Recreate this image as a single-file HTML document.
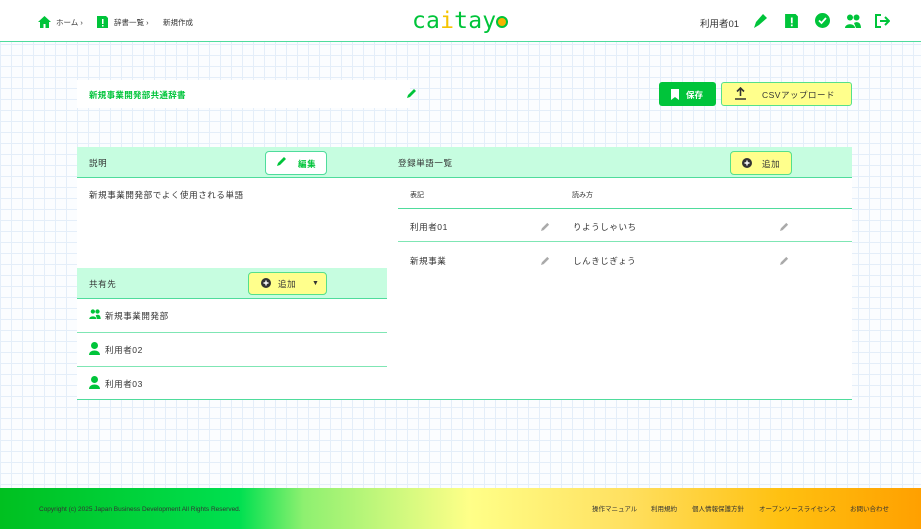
<!DOCTYPE html>
<html><head><meta charset="utf-8"><style>
*{margin:0;padding:0;box-sizing:border-box}
body{width:921px;height:529px;overflow:hidden;font-family:"Liberation Sans","Noto Sans CJK JP",sans-serif;color:#333;position:relative;
background-color:#fbfdff;background-image:linear-gradient(#e4eef9 1px,transparent 1px),linear-gradient(90deg,#e4eef9 1px,transparent 1px);background-size:11px 11px}
.a{position:absolute}
header{position:absolute;left:0;top:0;width:921px;height:42px;background:#fff;border-bottom:1.5px solid #4fdc9c}
.bc{font-size:7.5px;color:#333;top:17px}
.g{fill:#00c43a}
.panel{left:77px;top:147px;width:775px;height:253px;background:#fff;border-bottom:1px solid #4fdc9c}
.band{background:#c6fde0;border-bottom:1.5px solid #4fdc9c;height:31px}
.t9{font-size:8.5px;letter-spacing:0.6px}
.row{border-bottom:1.5px solid #7fe6b4}
footer{position:absolute;left:0;top:488px;width:921px;height:41px;background:linear-gradient(90deg,#00c020 0%,#00e050 26%,#8ef070 33%,#ffff88 51%,#ffe060 68%,#ffc010 85%,#ffa000 100%)}
footer span{position:absolute;top:18px;font-size:6.5px;color:#333;line-height:8px}
</style></head><body>
<header>
<svg class="a" style="left:38px;top:16px" width="13" height="12" viewBox="0 0 13 12"><path class="g" d="M6.5 0L0 6h2v6h3.5V8h2v4H11V6h2z"/></svg>
<span class="a bc" style="left:56px">ホーム ›</span>
<svg class="a" style="left:97px;top:16px" width="11" height="12" viewBox="0 0 11 12"><path class="g" d="M0 0h9l2 2v10H0z"/><rect x="5" y="3" width="1.5" height="5" fill="#fff"/><rect x="5" y="9" width="1.5" height="1.5" fill="#fff"/></svg>
<span class="a bc" style="left:114px">辞書一覧 ›</span>
<span class="a bc" style="left:163px">新規作成</span>
<div class="a" style="left:412px;top:7px;font-family:'DejaVu Sans Mono','Liberation Mono',monospace;font-size:23px;color:#00c43a;letter-spacing:0.2px;line-height:28px">ca<span style="color:#f5c400">i</span>tay<span style="display:inline-block;width:12px;height:12px;border-radius:50%;border:2.5px solid #00c43a;background:#f5b300;vertical-align:0"></span></div>
<span class="a" style="left:700px;top:16px;font-size:9.5px;color:#333">利用者01</span>
<svg class="a" style="left:752px;top:13px" width="16" height="16" viewBox="0 0 16 16"><path class="g" d="M2 15l2-6 7-8 4 4-8 7zM5 11l2 0"/></svg>
<svg class="a" style="left:785px;top:14px" width="13" height="14" viewBox="0 0 11 12"><path class="g" d="M0 0h9l2 2v10H0z"/><rect x="5" y="3" width="1.5" height="5" fill="#fff"/><rect x="5" y="9" width="1.5" height="1.5" fill="#fff"/></svg>
<svg class="a" style="left:815px;top:13px" width="15" height="15" viewBox="0 0 15 15"><circle class="g" cx="7.5" cy="7.5" r="7.5"/><path d="M4 7.5l2.5 2.5 4.5-5" stroke="#fff" stroke-width="1.8" fill="none"/></svg>
<svg class="a" style="left:845px;top:14px" width="16" height="14" viewBox="0 0 16 14"><circle class="g" cx="5" cy="3.5" r="3"/><circle class="g" cx="11.5" cy="3.5" r="3"/><path class="g" d="M0 14c0-5 10-5 10 0zM9 9c3-2 7-1 7 5h-5z"/></svg>
<svg class="a" style="left:875px;top:14px" width="15" height="14" viewBox="0 0 15 14" fill="none" stroke="#00c43a" stroke-width="2"><path d="M6 1H1v12h5M5 7h9M10 3l4 4-4 4"/></svg>
</header>

<div class="a" style="left:77px;top:80px;width:333px;height:28px;background:#fff"></div>
<span class="a" style="left:89px;top:89px;font-size:8.5px;font-weight:bold;color:#00c43a;letter-spacing:0.3px">新規事業開発部共通辞書</span>
<svg class="a" style="left:407px;top:88px" width="10" height="10" viewBox="0 0 10 10"><path class="g" d="M0 10l1-3 6-6 2 2-6 6z"/></svg>

<div class="a" style="left:659px;top:82px;width:57px;height:24px;background:#00c43a;border-radius:3px"></div>
<svg class="a" style="left:671px;top:89px" width="8" height="11" viewBox="0 0 8 11"><path d="M0 0h8v11L4 8 0 11z" fill="#fff"/></svg>
<span class="a" style="left:686px;top:89px;font-size:8.5px;color:#fff;font-weight:bold">保存</span>
<div class="a" style="left:721px;top:82px;width:131px;height:24px;background:#ffff8c;border:1.5px solid #56e08a;border-radius:3px"></div>
<svg class="a" style="left:735px;top:87px" width="11" height="13" viewBox="0 0 11 13"><path d="M5.5 1v8M2 4.5l3.5-3.5 3.5 3.5M0 12h11" stroke="#333" stroke-width="1.6" fill="none"/></svg>
<span class="a" style="left:762px;top:89px;font-size:8.5px;color:#333;letter-spacing:0.5px">CSVアップロード</span>

<div class="a panel">
 <div class="a band" style="left:0;top:0;width:775px"></div>
 <span class="a t9" style="left:12px;top:10px">説明</span>
 <div class="a" style="left:188px;top:4px;width:62px;height:24px;background:#fff;border:1.5px solid #4fdc9c;border-radius:4px"></div>
 <svg class="a" style="left:200px;top:9px" width="10" height="10" viewBox="0 0 10 10"><path class="g" d="M0 10l1-3 6-6 2 2-6 6z"/></svg>
 <span class="a t9" style="left:221px;top:11px;color:#00c43a;font-weight:bold">編集</span>
 <span class="a t9" style="left:321px;top:10px">登録単語一覧</span>
 <div class="a" style="left:653px;top:4px;width:62px;height:24px;background:#ffff8c;border:1.5px solid #56e08a;border-radius:4px"></div>
 <svg class="a" style="left:665px;top:11px" width="10" height="10" viewBox="0 0 10 10"><circle cx="5" cy="5" r="5" fill="#333"/><path d="M5 2.5v5M2.5 5h5" stroke="#fff" stroke-width="1.4"/></svg>
 <span class="a t9" style="left:685px;top:11px">追加</span>

 <span class="a t9" style="left:12px;top:42px">新規事業開発部でよく使用される単語</span>

 <div class="a band" style="left:0;top:121px;width:310px;height:31px"></div>
 <span class="a t9" style="left:12px;top:131px">共有先</span>
 <div class="a" style="left:171px;top:125px;width:79px;height:23px;background:#ffff8c;border:1.5px solid #56e08a;border-radius:4px"></div>
 <svg class="a" style="left:184px;top:131px" width="10" height="10" viewBox="0 0 10 10"><circle cx="5" cy="5" r="5" fill="#333"/><path d="M5 2.5v5M2.5 5h5" stroke="#fff" stroke-width="1.4"/></svg>
 <span class="a t9" style="left:201px;top:131px">追加</span>
 <span class="a" style="left:235px;top:133px;font-size:7px">▼</span>

 <div class="a row" style="left:0;top:152px;width:310px;height:34px"></div>
 <svg class="a" style="left:12px;top:162px" width="12" height="10" viewBox="0 0 16 14"><circle class="g" cx="5" cy="3.5" r="3"/><circle class="g" cx="11.5" cy="3.5" r="3"/><path class="g" d="M0 14c0-5 10-5 10 0zM9 9c3-2 7-1 7 5h-5z"/></svg>
 <span class="a t9" style="left:28px;top:163px">新規事業開発部</span>
 <div class="a row" style="left:0;top:186px;width:310px;height:34px"></div>
 <svg class="a" style="left:12px;top:195px" width="11" height="13" viewBox="0 0 11 13"><circle class="g" cx="5.5" cy="3.5" r="3.5"/><path class="g" d="M0 13c0-6 11-6 11 0z"/></svg>
 <span class="a t9" style="left:28px;top:197px">利用者02</span>
 <svg class="a" style="left:12px;top:229px" width="11" height="13" viewBox="0 0 11 13"><circle class="g" cx="5.5" cy="3.5" r="3.5"/><path class="g" d="M0 13c0-6 11-6 11 0z"/></svg>
 <span class="a t9" style="left:28px;top:231px">利用者03</span>

 <span class="a" style="left:333px;top:43px;font-size:7px">表記</span>
 <span class="a" style="left:495px;top:43px;font-size:7px">読み方</span>
 <div class="a row" style="left:321px;top:61px;width:454px;height:34px;border-top:1.5px solid #4fdc9c"></div>
 <span class="a t9" style="left:333px;top:74px">利用者01</span>
 <span class="a t9" style="left:496px;top:74px">りようしゃいち</span>
 <span class="a t9" style="left:333px;top:108px">新規事業</span>
 <span class="a t9" style="left:496px;top:108px">しんきじぎょう</span>
 <svg class="a" style="left:464px;top:75px" width="9" height="9" viewBox="0 0 10 10"><path d="M0 10l1-3 6-6 2 2-6 6z" fill="#aaa"/></svg>
 <svg class="a" style="left:703px;top:75px" width="9" height="9" viewBox="0 0 10 10"><path d="M0 10l1-3 6-6 2 2-6 6z" fill="#aaa"/></svg>
 <svg class="a" style="left:464px;top:109px" width="9" height="9" viewBox="0 0 10 10"><path d="M0 10l1-3 6-6 2 2-6 6z" fill="#aaa"/></svg>
 <svg class="a" style="left:703px;top:109px" width="9" height="9" viewBox="0 0 10 10"><path d="M0 10l1-3 6-6 2 2-6 6z" fill="#aaa"/></svg>
</div>

<footer>
<span style="left:39px;top:18px">Copyright (c) 2025 Japan Business Development All Rights Reserved.</span>
<span style="left:592px">操作マニュアル</span>
<span style="left:651px">利用規約</span>
<span style="left:692px">個人情報保護方針</span>
<span style="left:759px">オープンソースライセンス</span>
<span style="left:850px">お問い合わせ</span>
</footer>
</body></html>
